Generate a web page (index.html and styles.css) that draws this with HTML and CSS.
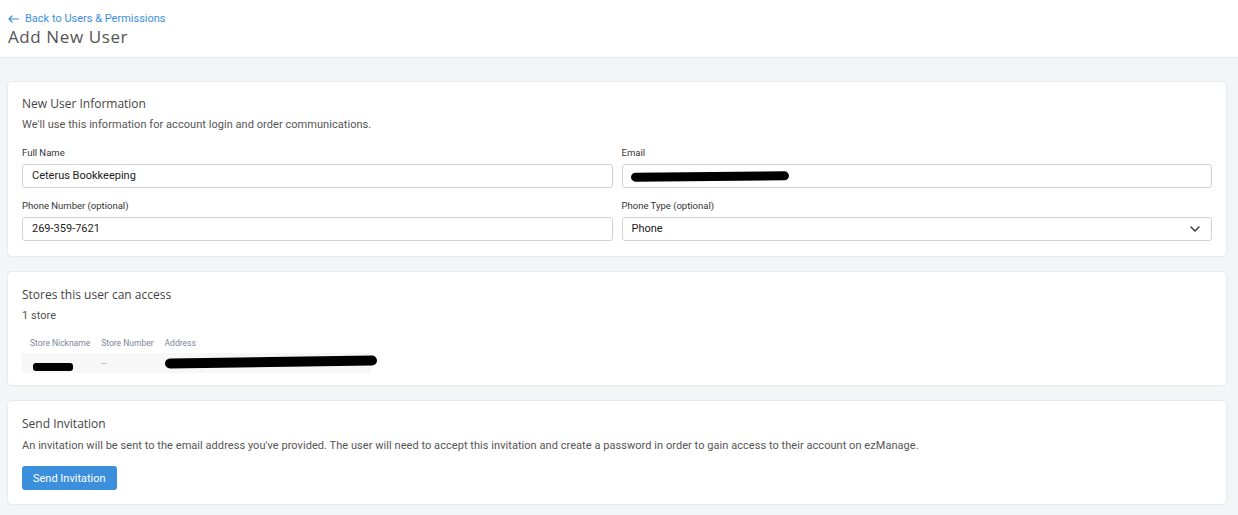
FILE: index.html
```html
<!DOCTYPE html>
<html lang="en">
<head>
  <meta charset="UTF-8">
  <meta name="viewport" content="width=device-width, initial-scale=1.0">
  <title>Add New User</title>
  <link rel="stylesheet" href="styles.css">
</head>
<body>
  <header class="page-header">
    <a class="back-link" href="#">
      <svg class="arrow" width="11" height="8" viewBox="0 0 11 8"><path d="M10.5 4H1.2M4 1L1 4l3 3" fill="none" stroke="#3b8ede" stroke-width="1.2" stroke-linecap="round" stroke-linejoin="round"/></svg>
      Back to Users &amp; Permissions
    </a>
    <h1>Add New User</h1>
  </header>

  <main class="page-body">

    <section class="card card-info">
      <h2>New User Information</h2>
      <p class="desc">We'll use this information for account login and order communications.</p>
      <div class="form-grid">
        <div class="field">
          <label>Full Name</label>
          <div class="input">Ceterus Bookkeeping</div>
        </div>
        <div class="field">
          <label>Email</label>
          <div class="input"><span class="redact redact-email"></span></div>
        </div>
        <div class="field">
          <label>Phone Number (optional)</label>
          <div class="input">269-359-7621</div>
        </div>
        <div class="field">
          <label>Phone Type (optional)</label>
          <div class="input select">
            Phone
            <svg class="chevron" width="10" height="6" viewBox="0 0 10 6"><path d="M1 1l4 4 4-4" fill="none" stroke="#333" stroke-width="1.4" stroke-linecap="round" stroke-linejoin="round"/></svg>
          </div>
        </div>
      </div>
    </section>

    <section class="card card-stores">
      <h2>Stores this user can access</h2>
      <p class="desc">1 store</p>
      <table class="stores">
        <thead>
          <tr>
            <th>Store Nickname</th>
            <th>Store Number</th>
            <th>Address</th>
          </tr>
        </thead>
        <tbody>
          <tr>
            <td><span class="redact redact-nick"></span></td>
            <td class="muted">--</td>
            <td><span class="redact redact-addr"></span></td>
          </tr>
        </tbody>
      </table>
    </section>

    <section class="card card-invite">
      <h2>Send Invitation</h2>
      <p class="desc">An invitation will be sent to the email address you've provided. The user will need to accept this invitation and create a password in order to gain access to their account on ezManage.</p>
      <button class="btn" type="button">Send Invitation</button>
    </section>

  </main>
</body>
</html>
```

FILE: styles.css
```css
body {
  margin: 0;
  padding: 0;
  background-color: #f4f5f7;
  font-family: Roboto, "Liberation Sans", Arial, sans-serif;
  color: #333;
}

.page-header {
  background-color: #fff;
  padding: 11px 8px 0;
  height: 46px;
  border-bottom: 1px solid #e6e7ea;
}

.back-link {
  display: flex;
  align-items: center;
  gap: 6px;
  color: #3b8ede;
  font-size: 11px;
  text-decoration: none;
  line-height: 14px;
  margin-top: 1px;
}

.page-header h1 {
  margin: 1px 0 0;
  font-family: "Open Sans", "Liberation Sans", sans-serif;
  font-weight: 400;
  font-size: 17px;
  letter-spacing: 0.6px;
  color: #555;
  line-height: 20px;
}

.page-body {
  padding: 24px 12px 10px 8px;
}

.card {
  background-color: #fff;
  border-radius: 4px;
  box-shadow: 0 0 0 1px #e8e9ec, 0 1px 2px rgba(0, 0, 0, 0.06);
  padding: 15px 14px 14px;
  margin-bottom: 16px;
}

.card-info {
  padding-top: 14px;
  padding-bottom: 15px;
}

.card h2 {
  margin: 0;
  font-family: "Open Sans", "Liberation Sans", sans-serif;
  font-weight: 400;
  font-size: 12px;
  color: #444;
  line-height: 16px;
}

.card .desc {
  margin: 6px 0 0;
  font-size: 11px;
  letter-spacing: 0.05px;
  line-height: 14px;
  color: #555;
}

.card-invite .desc {
  margin-top: 7px;
}

.form-grid {
  display: grid;
  grid-template-columns: 1fr 1fr;
  column-gap: 9px;
  row-gap: 12px;
  margin-top: 15px;
}

.field label {
  display: block;
  font-size: 9.5px;
  line-height: 12px;
  color: #333;
  margin-bottom: 5px;
}

.input {
  height: 22px;
  border: 1px solid #cfd2d6;
  border-radius: 3px;
  padding: 0 9px;
  font-size: 11px;
  line-height: 22px;
  color: #222;
  display: flex;
  align-items: center;
}

.input.select {
  justify-content: space-between;
}

.chevron {
  margin-right: 2px;
}

.redact {
  display: inline-block;
  background-color: #000;
  border-radius: 6px;
}

.redact-email {
  width: 158px;
  height: 9px;
  transform: rotate(-0.5deg);
  margin-left: -1px;
}

.card-stores {
  padding-bottom: 12px;
}

.stores {
  border-collapse: collapse;
  margin-top: 15px;
  font-size: 8.5px;
}

.stores th {
  text-align: left;
  font-weight: 400;
  color: #7a8797;
  padding: 0 3px 5px 8px;
  line-height: 10px;
}

.stores td {
  background-color: #f7f7f8;
  height: 20px;
  padding: 0 3px 0 8px;
  vertical-align: middle;
}

.stores td.muted {
  color: #999;
  font-size: 9px;
}

.redact-nick {
  width: 40px;
  height: 8px;
  margin-top: 9px;
  margin-left: 3px;
  border-radius: 3px;
}

.redact-addr {
  width: 212px;
  height: 10px;
  margin-left: 0;
  margin-right: -9px;
  transform: rotate(-0.8deg);
}

.btn {
  margin-top: 13px;
  background-color: #3c8fdd;
  color: #fff;
  border: none;
  border-radius: 3px;
  font-family: Roboto, "Liberation Sans", sans-serif;
  font-size: 11px;
  padding: 0 11px;
  height: 24px;
  cursor: pointer;
}
```
